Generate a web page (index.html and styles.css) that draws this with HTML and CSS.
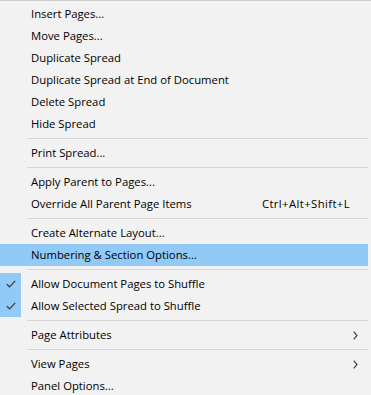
FILE: index.html
```html
<!DOCTYPE html>
<html>
<head>
<meta charset="utf-8">
<link rel="stylesheet" href="styles.css">
</head>
<body>
<div class="menu">
  <div class="item"><span class="label">Insert Pages...</span></div>
  <div class="item"><span class="label">Move Pages...</span></div>
  <div class="item"><span class="label">Duplicate Spread</span></div>
  <div class="item"><span class="label">Duplicate Spread at End of Document</span></div>
  <div class="item"><span class="label">Delete Spread</span></div>
  <div class="item"><span class="label">Hide Spread</span></div>
  <div class="sep"></div>
  <div class="item"><span class="label">Print Spread...</span></div>
  <div class="sep"></div>
  <div class="item"><span class="label">Apply Parent to Pages...</span></div>
  <div class="item"><span class="label">Override All Parent Page Items</span><span class="shortcut">Ctrl+Alt+Shift+L</span></div>
  <div class="sep"></div>
  <div class="item"><span class="label">Create Alternate Layout...</span></div>
  <div class="item hl"><span class="label">Numbering &amp; Section Options...</span></div>
  <div class="sep"></div>
  <div class="checked">
    <div class="item"><span class="check"><svg width="10" height="8" viewBox="0 0 10 8"><path d="M0.8 4.2 L3.6 6.8 L9.2 0.8" fill="none" stroke="#3a3a3a" stroke-width="1.2"/></svg></span><span class="label">Allow Document Pages to Shuffle</span></div>
    <div class="item"><span class="check"><svg width="10" height="8" viewBox="0 0 10 8"><path d="M0.8 4.2 L3.6 6.8 L9.2 0.8" fill="none" stroke="#3a3a3a" stroke-width="1.2"/></svg></span><span class="label">Allow Selected Spread to Shuffle</span></div>
  </div>
  <div class="sep"></div>
  <div class="item"><span class="label">Page Attributes</span><span class="arrow"><svg width="5" height="9" viewBox="0 0 5 9"><path d="M0.7 0.7 L4 4.5 L0.7 8.3" fill="none" stroke="#444" stroke-width="1.2"/></svg></span></div>
  <div class="sep"></div>
  <div class="item"><span class="label">View Pages</span><span class="arrow"><svg width="5" height="9" viewBox="0 0 5 9"><path d="M0.7 0.7 L4 4.5 L0.7 8.3" fill="none" stroke="#444" stroke-width="1.2"/></svg></span></div>
  <div class="item"><span class="label">Panel Options...</span></div>
</div>
</body>
</html>
```
FILE: styles.css
```css
html, body {
  margin: 0;
  padding: 0;
  background: #f2f2f2;
}
.menu {
  width: 371px;
  height: 395px;
  box-sizing: border-box;
  border-top: 1px solid #cccccc;
  padding-top: 2px;
  background: #f2f2f2;
  font-family: "Open Sans", "Noto Sans", sans-serif;
  font-size: 11.3px;
  color: #000;
  overflow: hidden;
}
.item {
  position: relative;
  height: 22px;
  display: flex;
  align-items: center;
  margin-right: 3px;
}
.label {
  padding-left: 31px;
  padding-bottom: 1px;
  flex: 1;
  white-space: nowrap;
}
.shortcut {
  padding-right: 18px;
  padding-bottom: 1px;
  letter-spacing: 0.4px;
  white-space: nowrap;
}
.arrow {
  width: 5px;
  height: 9px;
  margin-right: 10px;
  display: flex;
}
.hl {
  background: #91c9f7;
}
.checked {
  position: relative;
}
.checked::before {
  content: "";
  position: absolute;
  left: 0;
  top: 0;
  width: 21px;
  height: 44px;
  background: #91c9f7;
}
.check {
  position: absolute;
  left: 6px;
  top: 7px;
  width: 10px;
  height: 8px;
  display: flex;
}
.sep {
  height: 7px;
  display: flex;
  align-items: center;
  padding-left: 27px;
  margin-right: 3px;
}
.sep::before {
  content: "";
  flex: 1;
  height: 1px;
  background: #d7d7d7;
}
```
